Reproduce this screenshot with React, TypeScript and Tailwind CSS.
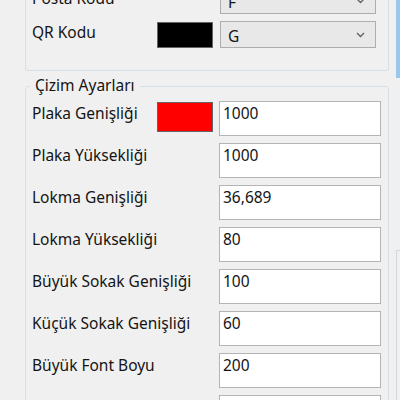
import React from "react";

const font = { fontFamily: '"Noto Sans", "Open Sans", sans-serif' };

function Chevron() {
  return (
    <svg width="9" height="6" viewBox="0 0 9 6" className="shrink-0">
      <path d="M1 1 L4.5 4.5 L8 1" fill="none" stroke="#606060" strokeWidth="1.3" />
    </svg>
  );
}

function ComboRow({ label, value, swatch }: { label: string; value: string; swatch?: string }) {
  return (
    <div className="flex items-start h-[26px]">
      <div className="w-[125px] pt-[1px] leading-[20px]">{label}</div>
      <div className="w-[56px]">
        {swatch ? <div className="w-[56px] h-[26px] mt-[1px] border border-[#646464]" style={{ background: swatch }} /> : null}
      </div>
      <div className="ml-[7px] w-[156px] h-[27px] border border-[#adadad] bg-[#e8e8e8] flex items-start justify-between pl-[7px] pr-[10px] pt-[4px]">
        <span className="leading-[20px]">{value}</span>
        <span className="pt-[6px]"><Chevron /></span>
      </div>
    </div>
  );
}

function FieldRow({ label, value, swatch }: { label: string; value: string; swatch?: string }) {
  return (
    <div className="flex items-start h-[35px]">
      <div className="w-[125px] pt-[2px] leading-[20px] whitespace-nowrap">{label}</div>
      <div className="w-[56px]">
        {swatch ? <div className="w-[56px] h-[30px] mt-[1px] border border-[#646464]" style={{ background: swatch }} /> : null}
      </div>
      <div className="ml-[6px] w-[162px] h-[35px] border border-[#b4b4b4] bg-white pl-[3px] pt-[1px] leading-[20px]">
        {value}
      </div>
    </div>
  );
}

export default function App() {
  const rows: [string, string, string?][] = [
    ["Plaka Genişliği", "1000", "#ff0000"],
    ["Plaka Yüksekliği", "1000"],
    ["Lokma Genişliği", "36,689"],
    ["Lokma Yüksekliği", "80"],
    ["Büyük Sokak Genişliği", "100"],
    ["Küçük Sokak Genişliği", "60"],
    ["Büyük Font Boyu", "200"],
    ["Küçük Font Boyu", "100"],
  ];
  return (
    <div className="w-[400px] h-[400px] overflow-hidden bg-[#f0f0f0] text-[15.5px] text-[#141414] flex" style={font}>
      <div className="w-[396px] shrink-0">
        <div className="mt-[-13px] ml-[25px] w-[364px] border-l border-r border-b border-[#d5dfe5] rounded-b-[3px] pl-[6px] pb-[23px] flex flex-col gap-[8px]">
          <ComboRow label="Posta Kodu" value="F" />
          <ComboRow label="QR Kodu" value="G" swatch="#000000" />
        </div>
        <div className="relative mt-[15px] ml-[25px] w-[364px] h-[400px] border border-[#d5dfe5] rounded-t-[3px] pl-[6px] pt-[14px] flex flex-col gap-[7px]">
          <div className="absolute left-[4px] top-[-12px] px-[5px] bg-[#f0f0f0] leading-[20px]">Çizim Ayarları</div>
          {rows.map(([l, v, s]) => (
            <FieldRow key={l} label={l} value={v} swatch={s} />
          ))}
        </div>
      </div>
      <div className="w-[4px] shrink-0 flex flex-col">
        <div className="h-[78px] bg-[#99c8ee]" />
        <div className="mt-[172px] flex-1 border-l border-t border-[#d6d6d6] bg-[#f0f0f0]" />
      </div>
    </div>
  );
}
